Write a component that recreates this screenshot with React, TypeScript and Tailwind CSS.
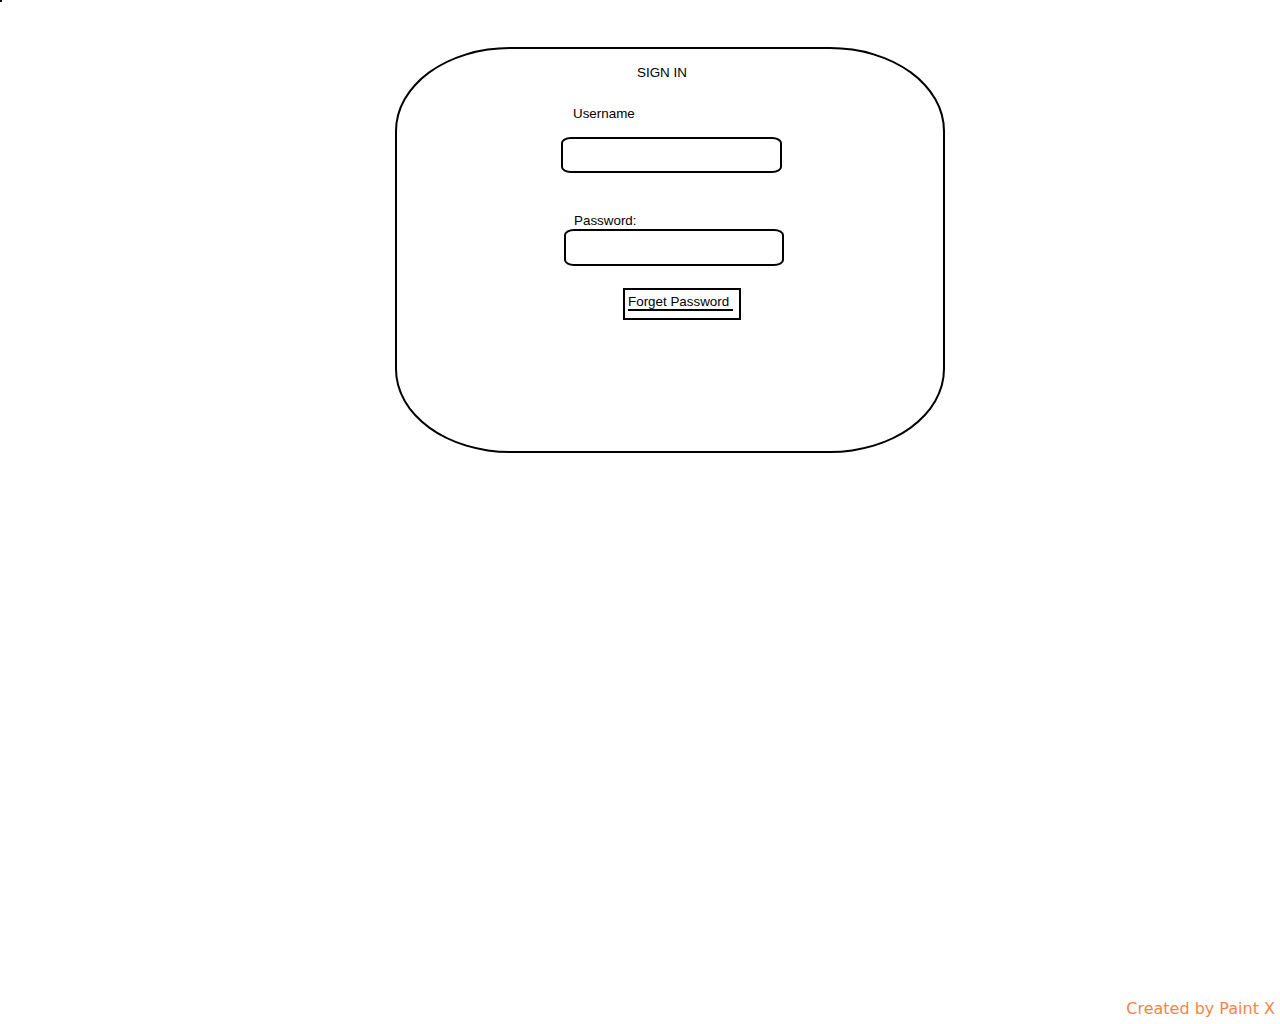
import React from "react";

export default function App() {
  return (
    <div className="relative min-h-screen w-full bg-white font-['Liberation_Sans',Arial,sans-serif] text-black">
      {/* stray dot at the corner */}
      <div className="absolute left-0 top-0 h-[2px] w-[2px] bg-black" />

      <div className="pt-[47px]">
        {/* sign in card */}
        <div className="ml-[395px] h-[406px] w-[550px] rounded-[115px_/_84px] border-2 border-black">
          <p className="ml-[240px] mt-[16px] text-[13.4px] leading-[15px]">SIGN IN</p>

          <p className="ml-[176px] mt-[26px] text-[13.4px] leading-[15px]">Username</p>
          <div className="ml-[164px] mt-[16px] h-[36px] w-[221px] rounded-[10px_/_6px] border-2 border-black" />

          <p className="ml-[177px] mt-[40px] text-[13.4px] leading-[15px]">Password:</p>
          <div className="ml-[167px] mt-[1px] h-[37px] w-[220px] rounded-[10px_/_6px] border-2 border-black" />

          <div className="ml-[226px] mt-[22px] flex h-[32px] w-[118px] items-start border-2 border-black pl-[3px] pt-[4px]">
            <span className="border-b-2 border-black pr-[4px] text-[13.4px] leading-[15px]">
              Forget Password
            </span>
          </div>
        </div>
      </div>

      <span className="absolute bottom-[5px] right-[5px] font-['DejaVu_Sans',Verdana,sans-serif] text-[16px] leading-[20px] text-[#f6844a]">
        Created by Paint X
      </span>
    </div>
  );
}
